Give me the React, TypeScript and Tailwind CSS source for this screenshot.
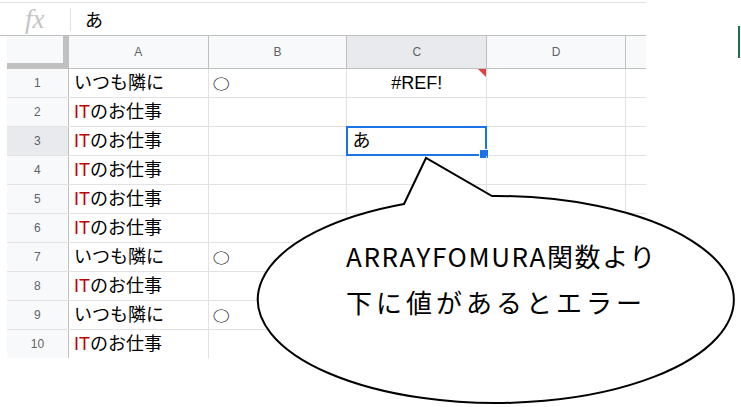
import React from 'react';

type Row = { n: number; a: string; b?: string; c?: string };

const rows: Row[] = [
  { n: 1, a: 'いつも隣に', b: '○', c: '#REF!' },
  { n: 2, a: 'ITのお仕事' },
  { n: 3, a: 'ITのお仕事', c: 'あ' },
  { n: 4, a: 'ITのお仕事' },
  { n: 5, a: 'ITのお仕事' },
  { n: 6, a: 'ITのお仕事' },
  { n: 7, a: 'いつも隣に', b: '○' },
  { n: 8, a: 'ITのお仕事' },
  { n: 9, a: 'いつも隣に', b: '○' },
  { n: 10, a: 'ITのお仕事' },
];

// "IT" is coloured red inside the cell text
const CellText = ({ text }: { text: string }) =>
  text.startsWith('IT') ? (
    <span>
      <span className="text-[#c00000]">IT</span>
      {text.slice(2)}
    </span>
  ) : (
    <span>{text}</span>
  );

const Callout = () => (
  <>
    <svg className="absolute inset-0 pointer-events-none" width="741" height="407" viewBox="0 0 741 407">
      <path
        d="M 404 204 L 426 158 L 492 196 A 238 103.5 0 1 1 404 204 Z"
        fill="white"
        stroke="black"
        strokeWidth="2"
        strokeLinejoin="miter"
      />
    </svg>
    <div className="absolute left-[346px] top-[233px] text-[26px] leading-[46px] text-black font-['Noto_Sans_CJK_JP',sans-serif] whitespace-nowrap">
      <div className="tracking-[1.6px]">ARRAYFOMURA関数より</div>
      <div className="tracking-[4px]">下に値があるとエラー</div>
    </div>
  </>
);

export default function App() {
  return (
    <div className="relative w-[741px] h-[407px] bg-white overflow-hidden font-['Liberation_Sans','Noto_Sans_CJK_JP',sans-serif]">
      <div className="flex">
        <div className="w-[646px]">
          {/* formula bar */}
          <div className="mt-[2px] h-[33px] border-t border-[#e0e0e0] flex items-center">
            <span className="w-[70px] pl-[25px] font-['Liberation_Serif',serif] italic text-[27px] leading-none text-[#c4c4c4]">
              fx
            </span>
            <span className="w-px h-[23px] bg-[#e0e0e0]" />
            <span className="pl-[14px] text-[18px] font-['Noto_Sans_CJK_JP',sans-serif]">あ</span>
          </div>

          {/* column headers */}
          <div className="border-t border-[#c0c0c0]">
            <div className="ml-[7px] h-[33px] flex border-b border-[#c0c0c0] text-[12px] text-[#5f6368]">
              <div className="w-[62px] bg-[#f8f9fa] border-r border-[#c0c0c0]">
                <div className="h-full border-r-[5px] border-b-[5px] border-[#c0c0c0]" />
              </div>
              <div className="w-[140px] bg-[#f8f9fa] border-r border-[#c0c0c0] flex items-center justify-center">A</div>
              <div className="w-[139px] bg-[#f8f9fa] border-r border-[#c0c0c0] flex items-center justify-center">B</div>
              <div className="w-[140px] bg-[#e8eaed] border-r border-[#c0c0c0] flex items-center justify-center">C</div>
              <div className="w-[139px] bg-[#f8f9fa] border-r border-[#c0c0c0] flex items-center justify-center">D</div>
              <div className="w-[20px] bg-[#f8f9fa]" />
            </div>
          </div>

          {/* cells */}
          <div className="ml-[7px]">
            {rows.map((r) => (
              <div
                key={r.n}
                className={`flex ${r.n === 10 ? 'h-[28px]' : 'h-[29px] border-b border-[#e2e2e2]'}`}
              >
                <div
                  className={`w-[62px] border-r border-[#c0c0c0] flex items-center justify-center text-[12px] text-[#5f6368] ${
                    r.n === 3 ? 'bg-[#e8eaed]' : 'bg-[#f8f9fa]'
                  }`}
                >
                  {r.n}
                </div>
                <div className="w-[140px] border-r border-[#e2e2e2] pl-[5px] flex items-center text-[18px] text-black">
                  <CellText text={r.a} />
                </div>
                <div className="w-[139px] border-r border-[#e2e2e2] pl-[4px] flex items-center text-[17px] text-black font-['Noto_Sans_CJK_JP',sans-serif]">
                  {r.b && <span className="inline-block scale-y-[0.8]">{r.b}</span>}
                </div>
                <div
                  className={`relative w-[140px] border-r border-[#e2e2e2] flex items-center text-[18px] text-black ${
                    r.n === 1 ? 'justify-center' : 'pl-[5px]'
                  }`}
                >
                  {r.c}
                  {r.n === 1 && (
                    <span className="absolute top-0 right-0 w-0 h-0 border-t-[8px] border-l-[8px] border-t-[#e0433a] border-l-transparent" />
                  )}
                  {r.n === 3 && (
                    <div className="absolute -left-px -top-px w-[141px] h-[30px] border-2 border-[#1a73e8]">
                      <span className="absolute -right-[4px] -bottom-[5px] w-[10px] h-[10px] bg-[#1a73e8] border border-white" />
                    </div>
                  )}
                </div>
                <div className="w-[139px] border-r border-[#e2e2e2]" />
                <div className="w-[20px]" />
              </div>
            ))}
          </div>
        </div>
        <div className="flex-1 flex justify-end">
          <div className="w-[2px] h-[32px] mt-[26px] mr-[1px] bg-[#1e7145]" />
        </div>
      </div>
      <Callout />
    </div>
  );
}
